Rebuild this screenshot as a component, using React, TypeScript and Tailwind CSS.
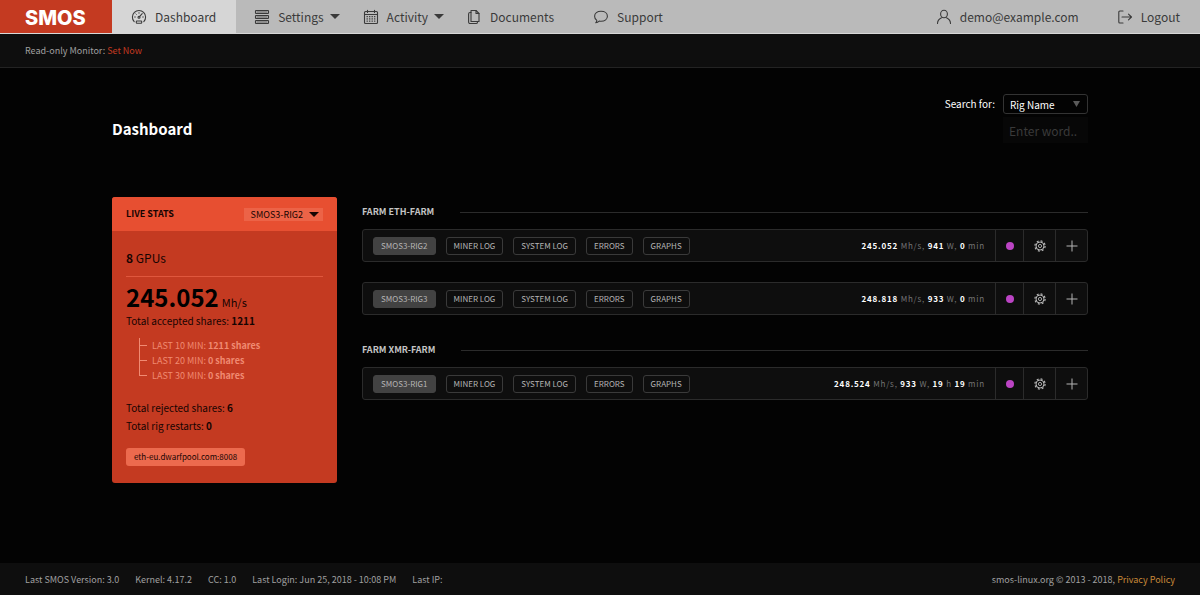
import type { ReactNode } from "react";

interface Rig {
  name: string;
  stats: { value: string; unit: string }[];
}

interface Farm {
  name: string;
  rigs: Rig[];
}

const FARMS: Farm[] = [
  {
    name: "ETH-FARM",
    rigs: [
      {
        name: "SMOS3-RIG2",
        stats: [
          { value: "245.052", unit: "Mh/s," },
          { value: "941", unit: "W," },
          { value: "0", unit: "min" },
        ],
      },
      {
        name: "SMOS3-RIG3",
        stats: [
          { value: "248.818", unit: "Mh/s," },
          { value: "933", unit: "W," },
          { value: "0", unit: "min" },
        ],
      },
    ],
  },
  {
    name: "XMR-FARM",
    rigs: [
      {
        name: "SMOS3-RIG1",
        stats: [
          { value: "248.524", unit: "Mh/s," },
          { value: "933", unit: "W," },
          { value: "19", unit: "h" },
          { value: "19", unit: "min" },
        ],
      },
    ],
  },
];

const RIG_ACTIONS = ["MINER LOG", "SYSTEM LOG", "ERRORS", "GRAPHS"];

const SHARES = [
  { label: "LAST 10 MIN:", value: "1211 shares" },
  { label: "LAST 20 MIN:", value: "0 shares" },
  { label: "LAST 30 MIN:", value: "0 shares" },
];

const Icon = ({ children }: { children: ReactNode }) => (
  <svg className="size-4 shrink-0" viewBox="0 0 16 16" fill="none" stroke="currentColor" strokeWidth="1.1" strokeLinecap="round" strokeLinejoin="round" aria-hidden="true">
    {children}
  </svg>
);

const GaugeIcon = () => (
  <Icon>
    <path d="M3.2 12.6A6.6 6.6 0 1 1 12.8 12.6" />
    <path d="M8 3.6v.7M3.6 8h.8M4.9 4.9l.5.5M11.6 8h.8" strokeWidth=".9" />
    <path d="M8.7 7.4l2.5-2.7" />
    <circle cx="8" cy="8.2" r="1" />
    <rect x="5.3" y="12" width="5.4" height="2.3" rx=".6" />
  </Icon>
);

const ServerIcon = () => (
  <Icon>
    <rect x="1.5" y="1.5" width="13" height="3" rx=".6" />
    <rect x="1.5" y="6.5" width="13" height="3" rx=".6" />
    <rect x="1.5" y="11.5" width="13" height="3" rx=".6" />
    <path d="M3 3h10M3 8h10M3 13h10" strokeWidth=".7" />
  </Icon>
);

const CalendarIcon = () => (
  <Icon>
    <rect x="1.5" y="2.5" width="13" height="12" rx="1" />
    <path d="M1.5 5.5h13M4.5 1.2v2.3M11.5 1.2v2.3" />
    <path d="M4 7.7h8M4 9.9h8M4 12.1h8" strokeWidth="1.2" strokeDasharray=".4 2.1" />
  </Icon>
);

const FilesIcon = () => (
  <Icon>
    <path d="M5 1.5h5l3 3v8H5z" />
    <path d="M10 1.5v3h3" />
    <path d="M5 3.5H4a1.4 1.4 0 0 0-1.4 1.4v8.2A1.4 1.4 0 0 0 4 14.5h6.2a1.4 1.4 0 0 0 1.3-1" />
  </Icon>
);

const ChatIcon = () => (
  <Icon>
    <path d="M8 2.3c3.8 0 6.4 2 6.4 4.9s-2.6 5-6.4 5c-.6 0-1.2-.1-1.8-.2-.8 1-1.8 1.7-3.4 1.7.7-.7 1-1.4 1-2.3C2.4 10.4 1.6 9 1.6 7.2 1.6 4.3 4.2 2.3 8 2.3z" />
  </Icon>
);

const UserIcon = () => (
  <Icon>
    <ellipse cx="8" cy="5" rx="3.4" ry="3.8" />
    <path d="M1.5 14.5c0-2.7 1.5-4.6 4-5.8M14.5 14.5c0-2.7-1.5-4.6-4-5.8" />
  </Icon>
);

const LogoutIcon = () => (
  <Icon>
    <path d="M6 2H2.8a1 1 0 0 0-1 1v10a1 1 0 0 0 1 1H6M5 8h9.5M11.5 5.2L14.5 8l-3 2.8" />
  </Icon>
);

const GearIcon = () => (
  <svg className="size-3" viewBox="0 0 12 12" fill="none" stroke="currentColor" aria-hidden="true">
    <circle cx="6" cy="6" r="4" />
    <circle cx="6" cy="6" r="1.6" strokeWidth=".9" />
    <circle cx="6" cy="6" r="5.1" strokeWidth="1.2" strokeDasharray="2 2.005" />
  </svg>
);

const PlusIcon = () => (
  <svg className="size-3" viewBox="0 0 12 12" fill="none" stroke="currentColor" aria-hidden="true">
    <path d="M6 .5v11M.5 6h11" />
  </svg>
);

const Caret = () => (
  <svg className="h-[5px] w-[10px] shrink-0" viewBox="0 0 10 5" fill="currentColor" aria-hidden="true">
    <path d="M0 0h10L5 5z" />
  </svg>
);

const NavLink = ({ icon, label, className }: { icon: ReactNode; label: string; className: string }) => (
  <a href="#" className={`flex items-center gap-2 ${className}`}>
    {icon}
    {label}
  </a>
);

const NavMenu = ({ icon, label, className }: { icon: ReactNode; label: string; className: string }) => (
  <button type="button" className={`flex items-center gap-2 ${className}`}>
    {icon}
    <span className="flex items-center gap-1.5">
      {label}
      <Caret />
    </span>
  </button>
);

const LiveStats = () => (
  <section className="w-[225px] shrink-0 overflow-hidden rounded-[3px] bg-[#c43a21] text-[10px] leading-[18px] text-[#160402]">
    <div className="flex h-[34px] items-center justify-between bg-[#e74f31] px-[14px]">
      <h2 className="text-[9px] font-bold">LIVE STATS</h2>
      <button type="button" className="flex h-[13px] items-center gap-1.5 bg-[#ec6347] pr-1 pl-[7px] text-[9px] leading-[13px]">
        SMOS3-RIG2
        <Caret />
      </button>
    </div>
    <div className="px-[14px] pt-[18px] pb-[17px]">
      <p className="border-b border-[#e0573d] pb-[9px] text-[12px]">
        <b>8</b> GPUs
      </p>
      <p className="flex items-baseline gap-[3px] pt-2 pb-[3px]">
        <b className="text-[24px] leading-6 text-black">245.052</b>
        <span className="text-[11px] leading-none">Mh/s</span>
      </p>
      <p>
        Total accepted shares: <b>1211</b>
      </p>
      <ul className="mt-2 mb-4 ml-[13px] text-[9px] leading-[15px] text-[#f08a72]">
        {SHARES.map((share) => (
          <li key={share.label} className="group flex">
            <span className="w-[13px]">
              <span className="block h-2 w-2 border-b border-l border-current" />
              <span className="block h-[7px] border-l border-current group-last:border-transparent" />
            </span>
            <span>
              {share.label} <b>{share.value}</b>
            </span>
          </li>
        ))}
      </ul>
      <p>
        Total rejected shares: <b>6</b>
      </p>
      <p>
        Total rig restarts: <b>0</b>
      </p>
      <p className="mt-[13px] w-fit rounded-[3px] bg-[#ec6a4e] px-2 text-[8px]">eth-eu.dwarfpool.com:8008</p>
    </div>
  </section>
);

const RigRow = ({ rig }: { rig: Rig }) => (
  <div className="flex h-[33px] items-stretch rounded-[3px] border border-[#2b2b2b] bg-[#0e0e0e]">
    <div className="flex flex-1 items-center gap-[10px] pl-[10px] text-[8px] leading-4 text-[#b4b4b4]">
      <button type="button" className="rounded-[3px] border border-[#424242] bg-[#424242] px-[7px]">
        {rig.name}
      </button>
      {RIG_ACTIONS.map((action) => (
        <button key={action} type="button" className="rounded-[3px] border border-[#3a3a3a] px-[7px]">
          {action}
        </button>
      ))}
    </div>
    <p className="self-center pr-[10px] text-[8px] tracking-widest text-[#747474]">
      {rig.stats.map((stat, i) => (
        <span key={i}>
          <b className="text-white">{stat.value}</b> {stat.unit}{" "}
        </span>
      ))}
    </p>
    <div className="flex w-7 items-center justify-center border-l border-[#2b2b2b]">
      <span className="size-2 rounded-full bg-[#bb44c4]" />
    </div>
    <button type="button" aria-label="Rig settings" className="flex w-8 items-center justify-center border-l border-[#2b2b2b] text-[#b4b4b4]">
      <GearIcon />
    </button>
    <button type="button" aria-label="Expand rig" className="flex w-8 items-center justify-center border-l border-[#2b2b2b] text-[#b4b4b4]">
      <PlusIcon />
    </button>
  </div>
);

const App = () => {
  return (
    <div className="flex min-h-screen flex-col bg-[#030303] font-['Noto_Sans_CJK_SC',sans-serif] text-white">
      <header className="flex h-[34px] border-b border-[#d8d8d8] bg-[#bababa] text-[12px] text-[#3a3a3a]">
        <a href="#" className="flex w-28 items-center bg-[#c43a21] pt-0.5 pl-[25px] font-['Inter',sans-serif] text-[20px] leading-none font-extrabold text-white">
          SMOS
        </a>
        <nav className="flex">
          <NavLink icon={<GaugeIcon />} label="Dashboard" className="bg-[#d6d6d6] pr-5 pl-[19px]" />
          <NavMenu icon={<ServerIcon />} label="Settings" className="pl-[18px]" />
          <NavMenu icon={<CalendarIcon />} label="Activity" className="pl-[23px]" />
          <NavLink icon={<FilesIcon />} label="Documents" className="pr-[19px] pl-[22px]" />
          <NavLink icon={<ChatIcon />} label="Support" className="px-5" />
        </nav>
        <div className="ml-auto flex">
          <NavLink icon={<UserIcon />} label="demo@example.com" className="px-[19px]" />
          <NavLink icon={<LogoutIcon />} label="Logout" className="pr-5 pl-[19px]" />
        </div>
      </header>

      <div className="flex h-[34px] items-center border-b border-[#232323] bg-[#0e0e0e] px-[25px] text-[9px] text-[#a0a0a0]">
        <p>
          Read-only Monitor:{" "}
          <a href="#" className="text-[#c43a21]">
            Set Now
          </a>
        </p>
      </div>

      <main className="flex-1 px-28 pt-[26px]">
        <div className="flex justify-between">
          <h1 className="pt-[23px] text-[15px] leading-6 font-bold">Dashboard</h1>
          <form className="grid grid-cols-[auto_85px] gap-x-2 gap-y-[3px]">
            <label htmlFor="search-field" className="text-[10px] leading-5">
              Search for:
            </label>
            <div className="relative">
              <select id="search-field" className="block h-5 w-full appearance-none rounded-[3px] border border-[#333] bg-[#030303] pl-1.5 text-[10px]">
                <option>Rig Name</option>
              </select>
              <svg className="pointer-events-none absolute top-[7px] right-2 h-[6px] w-[7px] text-[#5a5a5a]" viewBox="0 0 7 6" fill="currentColor" aria-hidden="true">
                <path d="M0 0h7L3.5 6z" />
              </svg>
            </div>
            <input type="text" aria-label="Search word" placeholder="Enter word.." className="col-start-2 block h-[26px] w-full min-w-0 bg-[#070707] px-1.5 text-[12px] placeholder:text-[#3a3a3a]" />
          </form>
        </div>

        <div className="mt-[54px] flex items-start gap-[25px]">
          <LiveStats />
          <div className="flex-1 pt-[7px]">
            {FARMS.map((farm) => (
              <section key={farm.name} className="mb-[27px]">
                <div className="mb-[9px] flex items-center gap-[26px]">
                  <h2 className="text-[9px] leading-4 font-bold text-[#c4c4c4]">FARM {farm.name}</h2>
                  <div className="h-px flex-1 bg-[#2b2b2b]" />
                </div>
                <div className="flex flex-col gap-5">
                  {farm.rigs.map((rig) => (
                    <RigRow key={rig.name} rig={rig} />
                  ))}
                </div>
              </section>
            ))}
          </div>
        </div>
      </main>

      <footer className="flex h-8 items-center justify-between bg-[#0e0e0e] px-[25px] pt-0.5 text-[9px] text-[#a0a0a0]">
        <div className="flex gap-4">
          <span>Last SMOS Version: 3.0</span>
          <span>Kernel: 4.17.2</span>
          <span>CC: 1.0</span>
          <span>Last Login: Jun 25, 2018 - 10:08 PM</span>
          <span>Last IP:</span>
        </div>
        <p>
          smos-linux.org © 2013 - 2018,{" "}
          <a href="#" className="text-[#c78838]">
            Privacy Policy
          </a>
        </p>
      </footer>
    </div>
  );
};

export default App;
